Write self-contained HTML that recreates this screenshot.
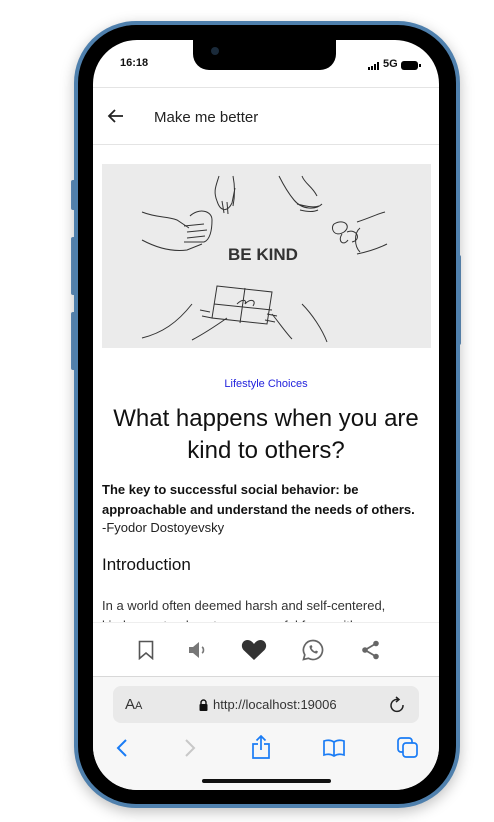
<!DOCTYPE html>
<html><head><style>
*{margin:0;padding:0;box-sizing:border-box}
body{width:494px;height:822px;background:#fff;position:relative;overflow:hidden;font-family:"Liberation Sans",sans-serif;color:#111}
.a{position:absolute}
</style></head><body>
<div class="a" style="left:71px;top:180px;width:5px;height:30px;background:#5f8fbd;border-radius:2px"></div>
<div class="a" style="left:71px;top:237px;width:5px;height:58px;background:#5f8fbd;border-radius:2px"></div>
<div class="a" style="left:71px;top:312px;width:5px;height:58px;background:#5f8fbd;border-radius:2px"></div>
<div class="a" style="left:456px;top:255px;width:5px;height:90px;background:#5f8fbd;border-radius:2px"></div>
<div class="a" style="left:74px;top:21px;width:386px;height:787px;border-radius:62px;background:#4f80ad;box-shadow:0 4px 14px rgba(0,0,0,.25)"></div>
<div class="a" style="left:78px;top:25px;width:378px;height:779px;border-radius:58px;background:#000"></div>
<div class="a" style="left:93px;top:40px;width:346px;height:750px;border-radius:44px;background:#fff;overflow:hidden">
  <div class="a" style="left:27px;top:17px;font-size:11px;font-weight:bold">16:18</div>
  <div class="a" style="left:275px;top:22px;width:13px;height:8px">
    <div class="a" style="left:0;bottom:0;width:2px;height:3px;background:#000"></div>
    <div class="a" style="left:3px;bottom:0;width:2px;height:4px;background:#000"></div>
    <div class="a" style="left:6px;bottom:0;width:2px;height:6px;background:#000"></div>
    <div class="a" style="left:9px;bottom:0;width:2px;height:8px;background:#000"></div>
  </div>
  <div class="a" style="left:290px;top:18px;font-size:11px;font-weight:bold">5G</div>
  <div class="a" style="left:308px;top:21px;width:17px;height:9px;background:#000;border-radius:3px"></div>
  <div class="a" style="left:326px;top:24px;width:2px;height:3px;background:#000"></div>
  <div class="a" style="left:100px;top:-2px;width:143px;height:32px;background:#000;border-radius:0 0 16px 16px"></div>
  <div class="a" style="left:118px;top:7px;width:8px;height:8px;background:#1a2a3a;border-radius:50%"></div>
  <div class="a" style="left:0;top:47px;width:346px;height:1px;background:#e4e4e4"></div>
  <svg class="a" style="left:14px;top:68px" width="18" height="16" viewBox="0 0 18 16"><path d="M16 8H2M8 2L2 8l6 6" stroke="#222" stroke-width="1.8" fill="none"/></svg>
  <div class="a" style="left:61px;top:69px;font-size:15px;color:#222">Make me better</div>
  <div class="a" style="left:0;top:104px;width:346px;height:1px;background:#e4e4e4"></div>
  <div class="a" style="left:9px;top:124px;width:329px;height:184px;background:#ebebeb">
    <svg width="329" height="184" viewBox="0 0 329 184" fill="none" stroke="#333" stroke-width="1">
      <path d="M40 48c15 6 25 4 35 8l12 8M40 76c15 8 30 12 45 10l15-6M88 52c8-8 22-6 22 4 0 10-2 20-8 22l-20 0M85 68l20-2M85 74l18-2M82 62l20-2"/>
      <path d="M117 12c-3 10-6 15-2 25 3 10 10 12 15 2l3-15M131 12c2 10 2 20 0 30M120 37l2 12M125 38l1 12"/>
      <path d="M177 12c5 10 10 18 15 24 8 10 22 10 28 4M200 12c3 8 10 10 15 20M195 40c8 2 16 4 22 2M198 46c8 2 14 2 18 0"/>
      <path d="M255 58c15-5 20-8 28-10M255 90c10-2 22-6 30-10M232 60c10-6 18 2 10 8-10 6-14-4-10-8M240 70c-5 8 2 12 6 6M245 68c10-4 15 8 5 10M258 64c-6 5-6 18 0 24"/>
      <path d="M40 174c20-5 35-15 50-34M90 176c15-8 25-15 35-22M115 122l55 6-5 32-55-6zM112 140l58 6M143 124l-5 35M135 140c5-5 10-5 8 0M143 140c5-6 12-4 8 2"/>
      <path d="M200 140c10 10 20 25 25 38M170 150c8 10 15 20 20 25M98 146l10 2M100 152l10 2M165 150l10 2M163 156l10 2"/>
    </svg>
    <div class="a" style="left:126px;top:81px;font-size:17px;font-weight:bold;color:#333">BE KIND</div>
  </div>
  <div class="a" style="left:0;top:338px;width:346px;text-align:center;font-size:11px;color:#2222dd">Lifestyle Choices</div>
  <div class="a" style="left:0;top:363px;width:346px;text-align:center;font-size:24px;line-height:32px;color:#111">What happens when you are<br>kind to others?</div>
  <div class="a" style="left:9px;top:440px;width:335px;font-size:13px;line-height:20px;font-weight:bold;color:#111">The key to successful social behavior: be approachable and understand the needs of others.</div>
  <div class="a" style="left:9px;top:480px;font-size:13px;color:#222">-Fyodor Dostoyevsky</div>
  <div class="a" style="left:9px;top:515px;font-size:17px;color:#111">Introduction</div>
  <div class="a" style="left:9px;top:556px;font-size:13px;line-height:20px;color:#333;width:335px">In a world often deemed harsh and self-centered, kindness stands out as a powerful force with</div>
  <div class="a" style="left:0;top:582px;width:346px;height:55px;background:#fff;border-top:1px solid #eee"></div>
  <svg class="a" style="left:45px;top:600px" width="16" height="20" viewBox="0 0 16 20"><path d="M1.5 1.5h13v17L8 13l-6.5 5.5z" stroke="#555" stroke-width="1.6" fill="none"/></svg>
  <svg class="a" style="left:95px;top:601px" width="22" height="18" viewBox="0 0 22 18"><path d="M1 6h4l6-5v16l-6-5H1z" fill="#777"/><path d="M14 6c2 1 2 5 0 6" stroke="#777" stroke-width="1.6" fill="none"/></svg>
  <svg class="a" style="left:148px;top:599px" width="26" height="22" viewBox="0 0 26 22"><path d="M13 21L2.5 11C-1 7 1.5 1 6.5 1 9.5 1 11.5 3 13 5 14.5 3 16.5 1 19.5 1 24.5 1 27 7 23.5 11z" fill="#333"/></svg>
  <svg class="a" style="left:209px;top:599px" width="22" height="22" viewBox="0 0 22 22"><path d="M11 1.5a9.5 9.5 0 1 1-4.6 17.8L1.5 20.5l1.3-4.6A9.5 9.5 0 0 1 11 1.5z" stroke="#666" stroke-width="1.7" fill="none"/><path d="M7.5 7c0 4 3.5 7.5 7.5 7.5l1-2-2-1-1 1c-1.5-.7-2.8-2-3.5-3.5l1-1-1-2z" fill="#666"/></svg>
  <svg class="a" style="left:268px;top:600px" width="20" height="20" viewBox="0 0 20 20"><circle cx="15" cy="3.5" r="2.8" fill="#666"/><circle cx="4" cy="10" r="2.8" fill="#666"/><circle cx="15" cy="16.5" r="2.8" fill="#666"/><path d="M15 3.5L4 10l11 6.5" stroke="#666" stroke-width="1.8" fill="none"/></svg>
  <div class="a" style="left:0;top:636px;width:346px;height:114px;background:#f7f7f7;border-top:1px solid #d8d8d8"></div>
  <div class="a" style="left:20px;top:646px;width:306px;height:37px;background:#e9e9e9;border-radius:8px"></div>
  <div class="a" style="left:32px;top:656px;font-size:15px;color:#333">A<span style="font-size:11px">A</span></div>
  <svg class="a" style="left:106px;top:659px" width="9" height="12" viewBox="0 0 9 12"><path d="M2 5V3.5a2.5 2.5 0 0 1 5 0V5" stroke="#111" stroke-width="1.4" fill="none"/><rect x="0.5" y="5" width="8" height="7" rx="1" fill="#111"/></svg>
  <div class="a" style="left:120px;top:657px;font-size:13px;color:#333">http://localhost:19006</div>
  <svg class="a" style="left:296px;top:656px" width="16" height="18" viewBox="0 0 16 18"><path d="M9 3.5A6 6 0 1 0 14 9" stroke="#222" stroke-width="1.5" fill="none"/><path d="M7 1l3 2.5L7 6" stroke="#222" stroke-width="1.5" fill="none"/></svg>
  <svg class="a" style="left:23px;top:698px" width="12" height="20" viewBox="0 0 12 20"><path d="M10 2L2 10l8 8" stroke="#1a7cf5" stroke-width="2" fill="none"/></svg>
  <svg class="a" style="left:91px;top:698px" width="12" height="20" viewBox="0 0 12 20"><path d="M2 2l8 8-8 8" stroke="#c8c8c8" stroke-width="2" fill="none"/></svg>
  <svg class="a" style="left:158px;top:695px" width="20" height="24" viewBox="0 0 20 24"><path d="M7 9H2v14h16V9h-5M10 15V1M5.5 5.5L10 1l4.5 4.5" stroke="#1a7cf5" stroke-width="1.7" fill="none"/></svg>
  <svg class="a" style="left:230px;top:699px" width="22" height="18" viewBox="0 0 22 18"><path d="M11 3C8 1 4 1 1 2v14c3-1 7-1 10 1 3-2 7-2 10-1V2c-3-1-7-1-10 1zM11 3v14" stroke="#1a7cf5" stroke-width="1.7" fill="none"/></svg>
  <svg class="a" style="left:304px;top:697px" width="21" height="21" viewBox="0 0 21 21"><rect x="1" y="1" width="14" height="14" rx="3" stroke="#1a7cf5" stroke-width="1.7" fill="none"/><rect x="6" y="6" width="14" height="14" rx="3" stroke="#1a7cf5" stroke-width="1.7" fill="#f7f7f7"/></svg>
  <div class="a" style="left:109px;top:739px;width:129px;height:4px;background:#111;border-radius:2px"></div>
</div>
</body></html>
